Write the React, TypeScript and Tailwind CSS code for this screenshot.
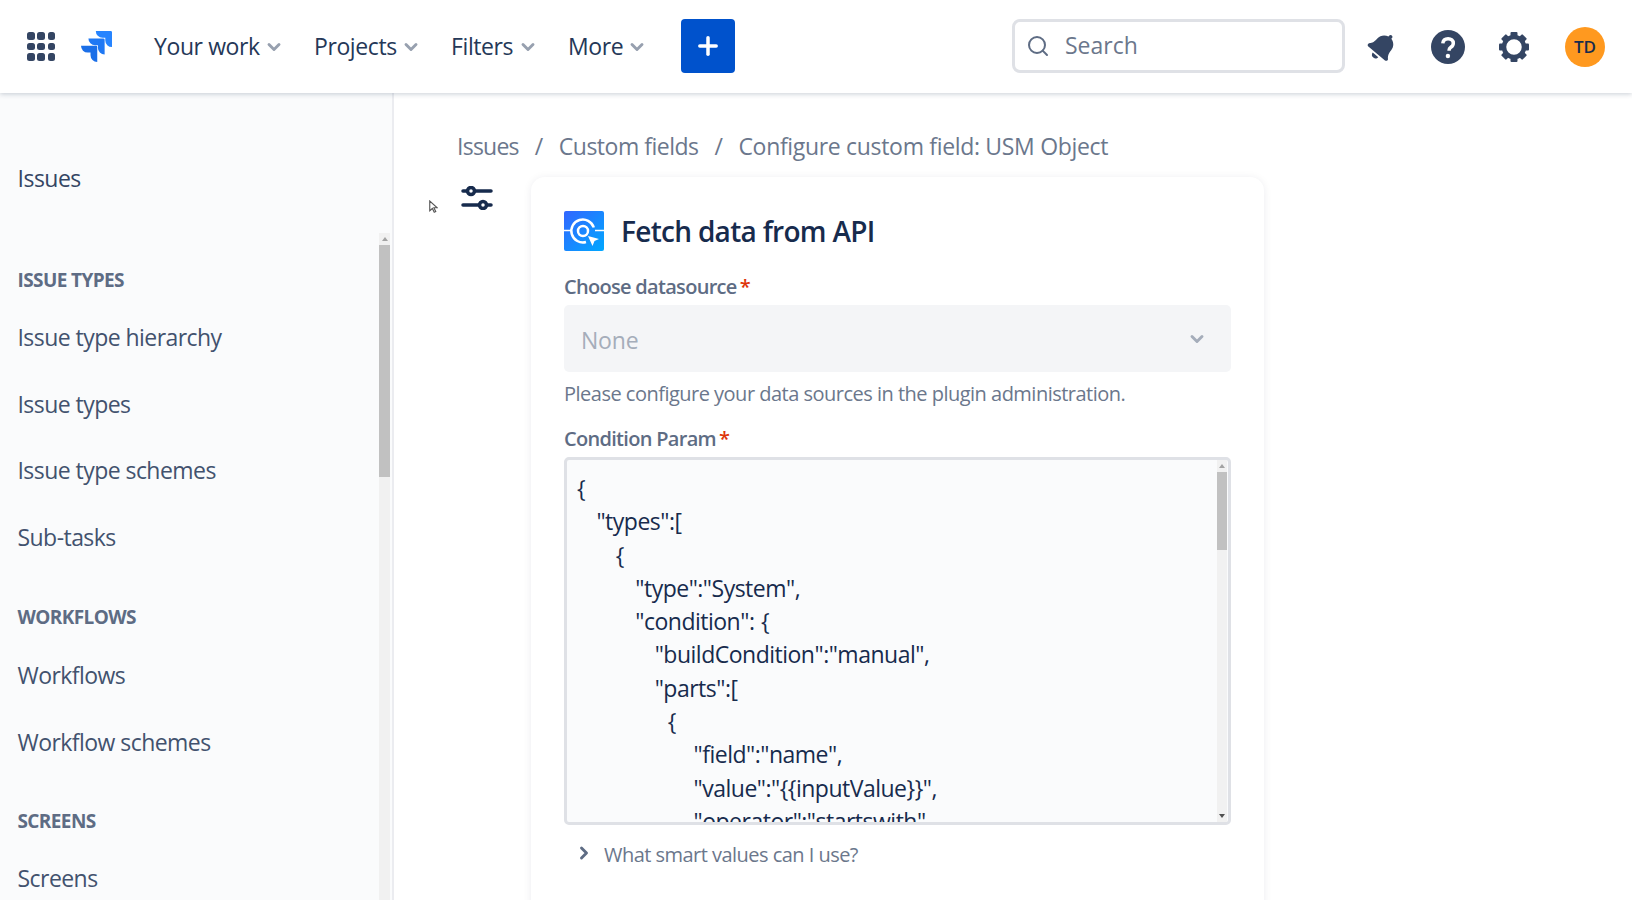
import { ChevronDown, ChevronRight, Plus, Search } from 'lucide-react'
import { FaBell } from 'react-icons/fa'

const navItems = [
  { label: 'Your work', width: 'w-[106px]', gap: 'mr-[30px]' },
  { label: 'Projects', width: 'w-[83px]', gap: 'mr-[30px]' },
  { label: 'Filters', width: 'w-[63px]', gap: 'mr-[30px]' },
  { label: 'More', width: 'w-[55px]', gap: 'mr-[34px]' },
]

const codeText = `{
   "types":[
      {
         "type":"System",
         "condition": {
            "buildCondition":"manual",
            "parts":[
              {
                  "field":"name",
                  "value":"{{inputValue}}",
                  "operator":"startswith"`

function JiraLogo() {
  return (
    <svg viewBox="0 0 24 24" className="w-[31px] h-[31px]">
      <path fill="#2684ff" d="M23.013 0H11.455a5.215 5.215 0 0 0 5.215 5.215h2.129v2.057A5.215 5.215 0 0 0 24 12.483V1.005A1.001 1.001 0 0 0 23.013 0Z" />
      <path fill="#1f78f4" d="M17.294 5.757H5.736a5.215 5.215 0 0 0 5.215 5.214h2.129v2.058a5.218 5.218 0 0 0 5.215 5.214V6.758a1.001 1.001 0 0 0-1.001-1.001z" />
      <path fill="#1b6fe8" d="M11.571 11.513H0a5.218 5.218 0 0 0 5.232 5.215h2.13v2.057A5.215 5.215 0 0 0 12.575 24V12.518a1.005 1.005 0 0 0-1.005-1.005z" />
    </svg>
  )
}

function GearIcon() {
  return (
    <svg viewBox="0 0 32 32" className="w-[32px] h-[32px]" fill="#344563">
      {[0, 45, 90, 135, 180, 225, 270, 315].map((a) => (
        <rect key={a} x="12.5" y="1" width="7" height="5" rx="1" transform={`rotate(${a} 16 16)`} />
      ))}
      <circle cx="16" cy="16" r="10" fill="none" stroke="#344563" strokeWidth="4.5" />
    </svg>
  )
}

function HelpIcon() {
  return (
    <svg viewBox="0 0 34 34" className="w-[34px] h-[34px]">
      <circle cx="17" cy="17" r="17" fill="#344563" />
      <path d="M11.8 13.4c.3-3 2.400-4.700 5.300-4.700 3 0 5.200 1.800 5.200 4.500 0 2-1 3.100-2.500 4.100-1.200.8-1.700 1.300-1.700 2.800v.7" fill="none" stroke="#fff" strokeWidth="3.500" />
      <circle cx="16.900" cy="26" r="2.200" fill="#fff" />
    </svg>
  )
}

function SlidersIcon() {
  return (
    <svg viewBox="0 0 32 24" className="w-[32px] h-[24px]" fill="none" stroke="#172b4d" strokeWidth="3.500" strokeLinecap="round">
      <path d="M2 5h4M14 5h16M2 19h16M26 19h4" />
      <circle cx="10" cy="5" r="3.500" />
      <circle cx="22" cy="19" r="3.500" />
    </svg>
  )
}

function ApiLogo() {
  return (
    <svg viewBox="0 0 40 40" className="w-[40px] h-[40px] shrink-0">
      <defs>
        <linearGradient id="api-bg" x1="0" y1="0" x2="1" y2="1">
          <stop offset="0" stopColor="#3366ff" />
          <stop offset="1" stopColor="#00a8ff" />
        </linearGradient>
      </defs>
      <rect width="40" height="40" rx="2" fill="url(#api-bg)" />
      <path d="M0 19.500h8M31 19.500h9" stroke="#fff" strokeWidth="1.500" />
      <path d="M29.800 16.500A11.500 11.500 0 1 0 22 31" fill="none" stroke="#fff" strokeWidth="2.500" />
      <circle cx="19" cy="20" r="5" fill="none" stroke="#fff" strokeWidth="2.500" />
      <path d="M24 25l11 3-4.500 2-2 5z" fill="#fff" />
    </svg>
  )
}

function NavItem({ label, width, gap }: { label: string; width: string; gap: string }) {
  return (
    <div className={`flex items-center ${gap}`}>
      <span className={`${width} text-[23px] leading-none text-[#253858] whitespace-nowrap tracking-[-0.4px]`}>{label}</span>
      <ChevronDown size={20} strokeWidth={3.500} className="ml-[4px] text-[#97a0af]" />
    </div>
  )
}

function SideHeading({ children, className }: { children: string; className: string }) {
  return <div className={`text-[19px] leading-[26px] font-bold text-[#5e6c84] tracking-[-0.6px] ${className}`}>{children}</div>
}

function SideLink({ children }: { children: string }) {
  return <div className="h-[66.6px] flex items-center text-[23px] text-[#42526e] tracking-[-0.55px] whitespace-nowrap">{children}</div>
}

function Scrollbar({ className, thumb }: { className: string; thumb: string }) {
  return (
    <div className={`flex flex-col bg-[#f1f1f1] shrink-0 ${className}`}>
      <div className="h-[12px] flex items-center justify-center">
        <div className="border-x-[3px] border-b-[4px] border-x-transparent border-b-[#a3a3a3]" />
      </div>
      <div className={`bg-[#c1c1c1] ${thumb}`} />
      <div className="flex-1" />
      <div className="h-[12px] flex items-center justify-center">
        <div className="border-x-[3px] border-t-[4px] border-x-transparent border-t-[#505050]" />
      </div>
    </div>
  )
}

export default function App() {
  return (
    <div className="relative h-[900px] w-[1632px] overflow-hidden bg-white flex flex-col font-['Open_Sans','Noto_Sans',sans-serif]">
      <header className="h-[93px] shrink-0 bg-white flex items-center shadow-[0_1px_5px_rgba(9,30,66,0.22)] z-10">
        <div className="ml-[27px] grid grid-cols-3 gap-[3px] w-[28px]">
          {Array.from({ length: 9 }).map((_, i) => (
            <div key={i} className="w-[7.500px] h-[7.500px] rounded-[2.500px] bg-[#344563]" />
          ))}
        </div>
        <div className="ml-[26px] mr-[42px] flex">
          <JiraLogo />
        </div>
        {navItems.map((n) => (
          <NavItem key={n.label} {...n} />
        ))}
        <button className="w-[54px] h-[54px] -mt-[2px] rounded-[4px] bg-[#0052cc] flex items-center justify-center text-white">
          <Plus size={28} strokeWidth={3} />
        </button>
        <div className="ml-[277px] w-[333px] h-[54px] border-[3px] border-[#dfe1e6] rounded-[8px] flex items-center pl-[11px] pr-[13px] -mt-[2px]">
          <Search size={24} strokeWidth={2} className="text-[#5e6c84]" />
          <span className="ml-[15px] text-[23px] text-[#6b778c]">Search</span>
        </div>
        <FaBell size={29} className="ml-[23px] rotate-[40deg] text-[#344563]" />
        <div className="ml-[34px] flex"><HelpIcon /></div>
        <div className="ml-[33px] flex"><GearIcon /></div>
        <div className="ml-[35px] w-[40px] h-[40px] rounded-full bg-[#ff991f] flex items-center justify-center text-[17px] font-semibold text-[#172b4d]">TD</div>
      </header>

      <div className="flex-1 flex min-h-0">
        <aside className="w-[394px] shrink-0 bg-[#fafbfc] border-r-2 border-[#ebecf0] flex overflow-hidden">
          <div className="flex-1 pl-[17.500px] min-w-0">
            <div className="mt-[69px] text-[23px] leading-[32px] font-medium text-[#344563] tracking-[-0.5px]">Issues</div>
            <SideHeading className="mt-[73px] mb-[11px]">ISSUE TYPES</SideHeading>
            <SideLink>Issue type hierarchy</SideLink>
            <SideLink>Issue types</SideLink>
            <SideLink>Issue type schemes</SideLink>
            <SideLink>Sub-tasks</SideLink>
            <SideHeading className="mt-[34px] mb-[12px]">WORKFLOWS</SideHeading>
            <SideLink>Workflows</SideLink>
            <SideLink>Workflow schemes</SideLink>
            <SideHeading className="mt-[32px] mb-[11px]">SCREENS</SideHeading>
            <SideLink>Screens</SideLink>
          </div>
          <Scrollbar className="w-[11px] mt-[140px] mr-[2px] h-[720px]" thumb="h-[232px]" />
        </aside>

        <main className="flex-1 min-w-0 pl-[63px]">
          <div className="mt-[37px] h-[32px] flex items-center text-[23px] text-[#6b778c] tracking-[-0.45px] whitespace-nowrap">
            <span className="tracking-[-0.75px]">Issues</span>
            <span className="mx-[16px]">/</span>
            <span className="tracking-[-0.5px]">Custom fields</span>
            <span className="mx-[16px]">/</span>
            <span className="tracking-[-0.32px]">Configure custom field: USM Object</span>
          </div>
          <div className="flex">
            <div className="mt-[24px] ml-[4px] w-[70px] flex items-start shrink-0">
              <SlidersIcon />
            </div>
            <section className="w-[733px] h-[760px] mt-[15px] rounded-[14px] bg-white shadow-[0_1px_8px_rgba(9,30,66,0.08)] px-[33px] pt-[34px]">
              <div className="flex items-center h-[40px]">
                <ApiLogo />
                <h1 className="ml-[17px] text-[28px] font-semibold text-[#172b4d] tracking-[-0.7px]">Fetch data from API</h1>
              </div>
              <div className="mt-[22px] h-[28px] flex items-center text-[20px] font-semibold text-[#5e6c84] tracking-[-0.7px]">
                Choose datasource<span className="ml-[3px] text-[#de350b]">*</span>
              </div>
              <div className="mt-[4px] h-[67px] rounded-[5px] bg-[#f4f5f7] flex items-center justify-between pl-[17px] pr-[24px]">
                <span className="mt-[3px] text-[23px] text-[#a5adba] tracking-[-0.2px]">None</span>
                <ChevronDown size={20} strokeWidth={3.500} className="mt-[1px] text-[#a5adba]" />
              </div>
              <p className="mt-[8px] h-[28px] flex items-center text-[20px] text-[#6b778c] tracking-[-0.51px] whitespace-nowrap">
                Please configure your data sources in the plugin administration.
              </p>
              <div className="mt-[17px] h-[28px] flex items-center text-[20px] font-semibold text-[#5e6c84] tracking-[-0.7px]">
                Condition Param<span className="ml-[3px] text-[#de350b]">*</span>
              </div>
              <div className="mt-[4px] h-[368px] border-[3px] border-[#dfe1e6] rounded-[5px] bg-[#fafbfc] flex overflow-hidden">
                <pre className="flex-1 min-w-0 overflow-hidden pl-[10px] pt-[12px] font-['Open_Sans','Noto_Sans',sans-serif] text-[23px] leading-[33.300px] text-[#172b4d] tracking-[-0.5px] [word-spacing:1px] whitespace-pre">
                  {codeText}
                </pre>
                <Scrollbar className="w-[10px] mr-[1px]" thumb="h-[78px]" />
              </div>
              <div className="mt-[16px] h-[28px] flex items-center pl-[10px] text-[20px] text-[#6b778c] tracking-[-0.53px]">
                <ChevronRight size={20} strokeWidth={3.500} className="text-[#5e6c84] -mt-[4px]" />
                <span className="ml-[10px]">What smart values can I use?</span>
              </div>
            </section>
          </div>
        </main>
      </div>

      <svg viewBox="0 0 12 18" className="absolute left-[429px] top-[200px] w-[9px] h-[14px]" fill="#fff" stroke="#555" strokeWidth="1.500">
        <path d="M1 1v13l3.500-3 2.500 5 2-1-2.500-5H11z" />
      </svg>
    </div>
  )
}
